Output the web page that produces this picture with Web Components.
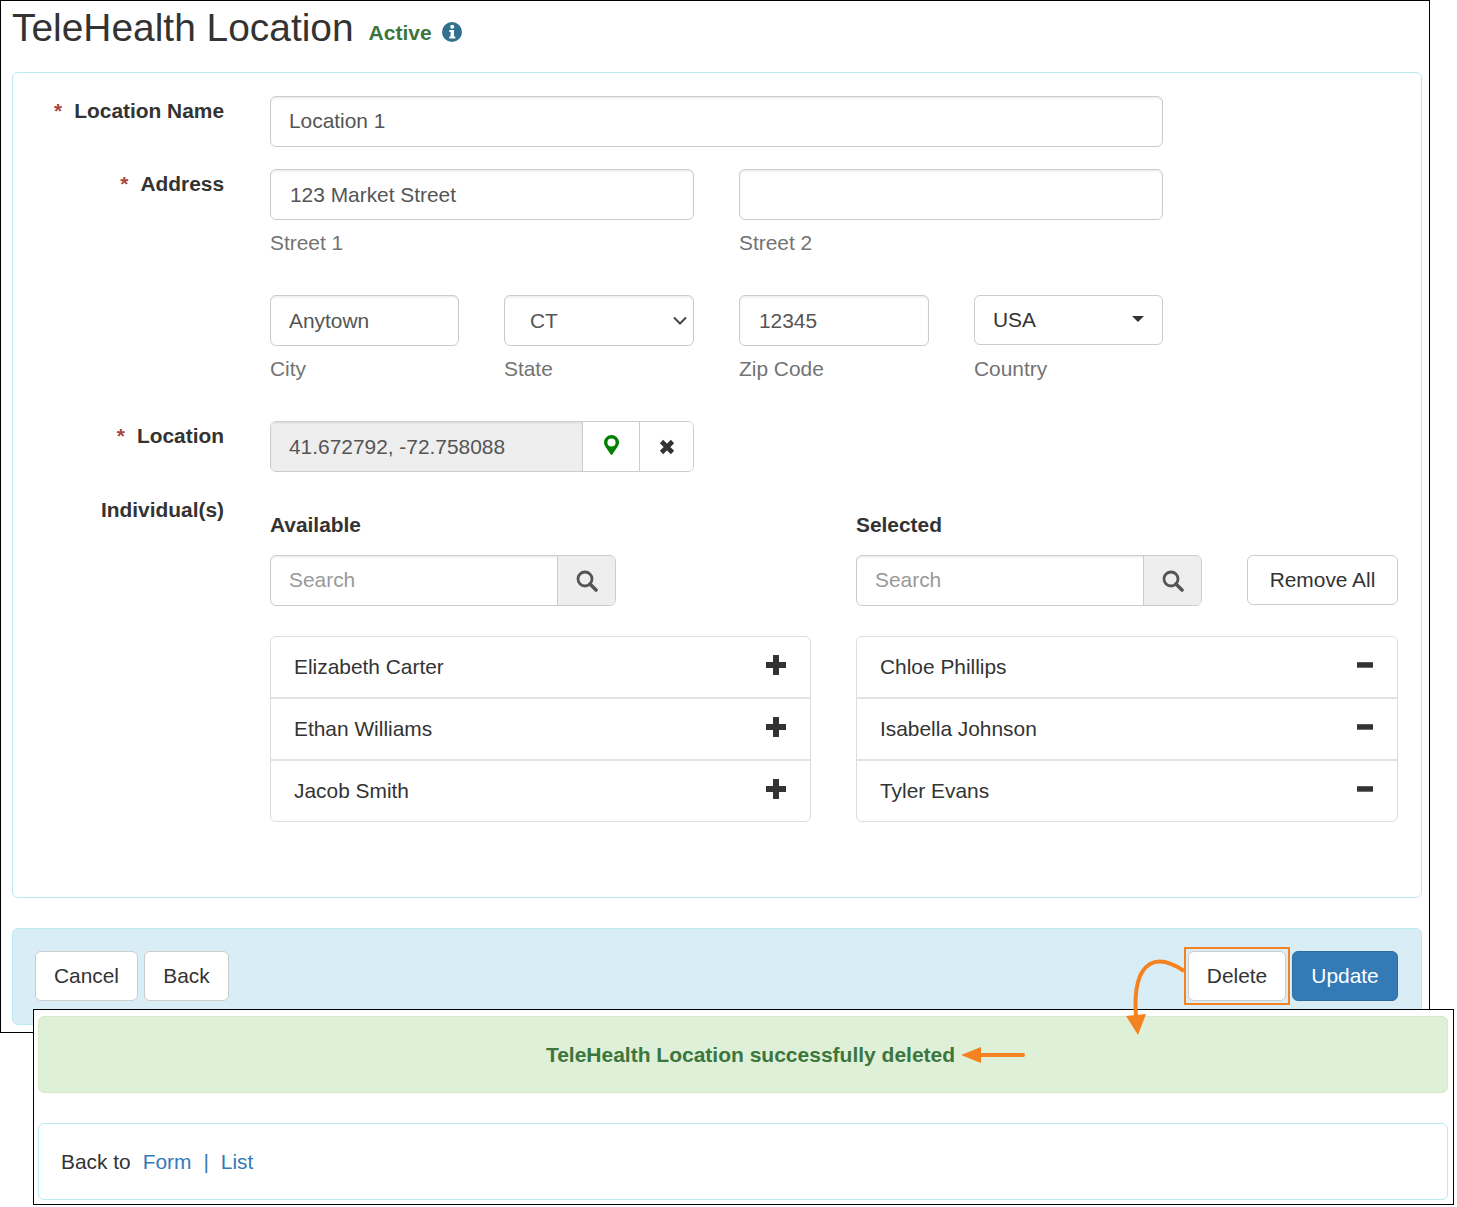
<!DOCTYPE html>
<html><head><meta charset="utf-8"><title>TeleHealth Location</title>
<style>
html,body{margin:0;padding:0;background:#fff}
body{font-family:"Liberation Sans",Arial,sans-serif;font-size:20.9px;color:#333}
</style></head><body>
<x-page>
  <x-window style="--l:0px;--t:0px;--w:1430px;--h:1033px">
    <x-title text="TeleHealth Location" status="Active"></x-title>
    <x-panel class="form" style="--h:826px;--mt:0px;--pad:23px 23px 0 0">
      <x-row label="Location Name" req>
        <x-field style="width:893px;--pb:2px">Location 1</x-field>
      </x-row>
      <x-row label="Address" req style="margin-top:22px">
        <x-cols tracks="424px 424px" style="width:893px">
          <x-labeled hint="Street 1"><x-field style="--pl:19px">123 Market Street</x-field></x-labeled>
          <x-labeled hint="Street 2"><x-field></x-field></x-labeled>
        </x-cols>
        <x-cols tracks="189px 190px 190px 189px" style="width:893px;margin-top:37px">
          <x-labeled hint="City"><x-field>Anytown</x-field></x-labeled>
          <x-labeled hint="State"><x-field kind="native" style="--pl:25px">CT</x-field></x-labeled>
          <x-labeled hint="Zip Code"><x-field style="--pl:19px">12345</x-field></x-labeled>
          <x-labeled hint="Country"><x-field kind="caret">USA</x-field></x-labeled>
        </x-cols>
      </x-row>
      <x-row label="Location" req style="margin-top:37px">
        <x-geo value="41.672792, -72.758088"></x-geo>
      </x-row>
      <x-row label="Individual(s)" style="margin-top:23px">
        <x-cols tracks="541px 542px" style="width:1128px">
          <x-picker heading="Available">
            <x-item name="Elizabeth Carter" op="add"></x-item>
            <x-item name="Ethan Williams" op="add"></x-item>
            <x-item name="Jacob Smith" op="add"></x-item>
          </x-picker>
          <x-picker heading="Selected" removable>
            <x-item name="Chloe Phillips" op="remove"></x-item>
            <x-item name="Isabella Johnson" op="remove"></x-item>
            <x-item name="Tyler Evans" op="remove"></x-item>
          </x-picker>
        </x-cols>
      </x-row>
    </x-panel>
    <x-actions>
      <x-btn style="width:103px">Cancel</x-btn>
      <x-btn style="width:85px">Back</x-btn>
      <span slot="right" style="display:flex;gap:6px">
        <x-btn style="width:98px">Delete</x-btn>
        <x-btn primary style="width:106px">Update</x-btn>
      </span>
    </x-actions>
  </x-window>
  <x-window style="--l:33px;--t:1009px;--w:1421px;--h:196px;--pl:4px">
    <x-alert>TeleHealth Location successfully deleted</x-alert>
    <x-backlinks></x-backlinks>
  </x-window>
  <x-annotations></x-annotations>
</x-page>
<script>
function def(name, css, html, extra){
  const tpl=document.createElement('template');
  tpl.innerHTML='<style>'+css+'</style>'+html;
  customElements.define(name, class extends HTMLElement{
    constructor(){super();this.attachShadow({mode:'open'}).appendChild(tpl.content.cloneNode(true));}
    connectedCallback(){ if(extra) extra.call(this,this.shadowRoot); }
  });
}
const ICON={
 search:'<svg width="22" height="22" viewBox="0 0 22 22"><circle cx="9" cy="9" r="7" fill="none" stroke="#555" stroke-width="2.8"/><path d="M14 14l6 6" stroke="#555" stroke-width="3.6" stroke-linecap="round"/></svg>',
 plus:'<svg width="20" height="20" viewBox="0 0 20 20" style="display:block"><path d="M7 0h6v7h7v6h-7v7H7v-7H0V7h7z" fill="#333"/></svg>',
 minus:'<svg width="16" height="6" viewBox="0 0 16 6" style="display:block"><rect width="16" height="5.500" y=".2" fill="#333"/></svg>',
 pin:'<svg width="15" height="20" viewBox="0 0 15 20" style="display:block"><path fill-rule="evenodd" d="M7.500 0a7.500 7.500 0 0 1 7.500 7.500c0 1.400-.4 2.400-1 3.600L8.300 19.400a.9.900 0 0 1-1.600 0L1 11.100C.4 9.900 0 8.900 0 7.500A7.500 7.500 0 0 1 7.500 0zm0 3.400a4.100 4.100 0 1 0 0 8.200 4.100 4.100 0 0 0 0-8.200z" fill="#008000"/></svg>',
 x:'<svg width="16" height="16" viewBox="0 0 16 16" style="display:block"><path d="M2.500 2.500l11 11M13.500 2.500l-11 11" stroke="#333" stroke-width="4.600" fill="none"/></svg>',
 info:'<svg width="20" height="20" viewBox="0 0 20 20" style="display:block"><circle cx="10" cy="10" r="10" fill="#31708f"/><circle cx="10.200" cy="4.800" r="2" fill="#fff"/><path d="M7.300 8h4.700v6.500h1.300v2H7.300v-2h1.300V10H7.300z" fill="#fff"/></svg>'
};
def('x-page',':host{display:block;position:relative;width:1457px;height:1207px;overflow:hidden;background:#fff}','<slot></slot>');
def('x-window',`:host{display:block;position:absolute;left:var(--l);top:var(--t);width:var(--w);height:var(--h);box-sizing:border-box;border:1.500px solid #000;background:#fff;padding-left:var(--pl,11px);padding-right:7px}`,'<slot></slot>');
def('x-title',`:host{display:flex;align-items:flex-start;height:71px;box-sizing:border-box;padding-top:2px}
 h1{margin:0;font-weight:400;font-size:38.900px;line-height:50px;color:#333}
 b{margin:15px 0 0 15px;font-size:21px;line-height:30px;color:#3c763d}
 i{margin:19px 0 0 10px}`,
 '<h1></h1><b></b><i></i>',function(r){r.querySelector('h1').textContent=this.getAttribute('text');r.querySelector('b').textContent=this.getAttribute('status');r.querySelector('i').innerHTML=ICON.info;});
def('x-panel',`:host{display:block;box-sizing:border-box;height:var(--h);border:1px solid #bce8f1;border-radius:6px;padding:var(--pad);background:#fff}`,'<slot></slot>');
def('x-row',`:host{display:flex;align-items:flex-start}
 .l{flex:none;width:211px;margin-right:46px;text-align:right;font-weight:700;line-height:30px;color:#333}
 .s{color:#a94442;margin-right:12px}
 .c{flex:none}`,
 '<div class="l"><span class="s"></span><span class="t"></span></div><div class="c"><slot></slot></div>',function(r){r.querySelector('.t').textContent=this.getAttribute('label');const s=r.querySelector('.s');if(this.hasAttribute('req'))s.textContent='*';else s.remove();});
def('x-cols',`:host{display:grid;column-gap:45px}`,'<slot></slot>',function(){this.style.gridTemplateColumns=this.getAttribute('tracks');});
def('x-labeled',`:host{display:block;min-width:0}.h{margin-top:8px;line-height:30px;color:#737373}`,'<slot></slot><div class="h"></div>',function(r){r.querySelector('.h').textContent=this.getAttribute('hint');});
def('x-field',`:host{display:flex;align-items:center;justify-content:space-between;box-sizing:border-box;height:51px;border:1px solid #ccc;border-radius:6px;padding:0 14px var(--pb,0) var(--pl,18px);color:#555;background:#fff;box-shadow:inset 0 1.500px 1.500px rgba(0,0,0,.075)}
 :host([kind=caret]){height:50px;margin-bottom:9px;color:#333;box-shadow:none;padding-right:18px}
 :host([kind=native]){padding-right:6px}
 svg{display:block}`,'<span><slot></slot></span><span class="a"></span>',function(r){const k=this.getAttribute('kind'),a=r.querySelector('.a');
 if(k==='native')a.innerHTML='<svg width="14" height="9" viewBox="0 0 14 9"><path d="M1 1.500l6 6 6-6" fill="none" stroke="#444" stroke-width="2"/></svg>';
 if(k==='caret')a.innerHTML='<svg width="12" height="6" viewBox="0 0 12 6" style="margin-top:-2px"><path d="M0 0h12L6 6z" fill="#333"/></svg>';});
def('x-geo',`:host{display:flex;width:424px;height:51px;box-sizing:border-box;border:1px solid #ccc;border-radius:6px;overflow:hidden}
 .v{flex:1;display:flex;align-items:center;padding-left:18px;background:#eee;color:#555;box-shadow:inset 0 1.500px 1.500px rgba(0,0,0,.075)}
 .b{display:flex;align-items:center;justify-content:center;border-left:1px solid #ccc;background:#fff;box-sizing:border-box}
 .p{width:57px;padding-bottom:4px}.x{width:54px}`,
 '<div class="v"></div><div class="b p"></div><div class="b x"></div>',function(r){r.querySelector('.v').textContent=this.getAttribute('value');r.querySelector('.p').innerHTML=ICON.pin;r.querySelector('.x').innerHTML=ICON.x;});
def('x-search',`:host{display:flex;width:346px;height:51px;box-sizing:border-box;border:1px solid #ccc;border-radius:6px;overflow:hidden;box-shadow:inset 0 1.500px 1.500px rgba(0,0,0,.075)}
 .p{flex:1;display:flex;align-items:center;padding:0 0 2px 18px;color:#999}
 .b{width:58px;box-sizing:border-box;border-left:1px solid #ccc;background:#eee;display:flex;align-items:center;justify-content:center}`,
 '<div class="p">Search</div><div class="b"></div>',function(r){r.querySelector('.b').innerHTML=ICON.search;});
def('x-btn',`:host{display:inline-flex;align-items:center;justify-content:center;box-sizing:border-box;height:50px;border:1px solid #ccc;border-radius:6px;background:#fff;color:#333}
 :host([primary]){background:#337ab7;border-color:#2e6da4;color:#fff}`,'<slot></slot>');
def('x-picker',`:host{display:block;min-width:0;padding-top:15px}
 h4{margin:0 0 15px;font-size:20.900px;line-height:30px;font-weight:700;color:#333}
 .s{display:flex;justify-content:space-between;align-items:flex-start}
 .l{margin-top:30px;border:1px solid #ddd;border-radius:6px;overflow:hidden}`,
 '<h4></h4><div class="s"><x-search></x-search><span class="rm"></span></div><div class="l"><slot></slot></div>',function(r){r.querySelector('h4').textContent=this.getAttribute('heading');
  if(this.hasAttribute('removable')){const b=document.createElement('x-btn');b.textContent='Remove All';b.style.width='151px';r.querySelector('.rm').appendChild(b);}});
def('x-item',`:host{display:flex;align-items:center;justify-content:space-between;box-sizing:border-box;height:62px;padding:0 24px 0 23px;color:#333;border-top:2px solid #e3e3e3}
 :host(:first-child){border-top:0;height:60px}
 .i{margin-top:-5px}`,'<span class="n"></span><span class="i"></span>',function(r){r.querySelector('.n').textContent=this.getAttribute('name');r.querySelector('.i').innerHTML=this.getAttribute('op')==='add'?ICON.plus:ICON.minus;});
def('x-actions',`:host{display:flex;justify-content:space-between;box-sizing:border-box;margin-top:30px;height:97px;padding:22px 23px 0 22px;background:#d9edf7;border:1px solid #bce8f1;border-radius:6px}
 .g{display:flex;gap:6px;align-items:flex-start}`,'<div class="g"><slot></slot></div><div class="g"><slot name="right"></slot></div>');
def('x-alert',`:host{display:flex;align-items:center;justify-content:center;box-sizing:border-box;margin-top:5.500px;width:1410px;height:77px;background:#dff0d8;border:1px solid #d6e9c6;border-radius:6px;color:#3c763d;font-weight:700;padding:1px 0 0 15px;font-size:21px}`,'<span><slot></slot></span>');
def('x-backlinks',`:host{display:flex;align-items:center;box-sizing:border-box;margin-top:30px;width:1410px;height:77px;padding:2px 0 0 22px;border:1px solid #bce8f1;border-radius:6px;color:#333}
 a{color:#337ab7;text-decoration:none}
 .a{margin-left:12px}.p{color:#337ab7;margin:0 12px}`,'<span>Back to</span><a class="a" href="#">Form</a><span class="p">|</span><a href="#">List</a>');
def('x-annotations',`:host{position:absolute;left:0;top:0;width:1457px;height:1207px;pointer-events:none}svg{display:block}`,
 `<svg width="1457" height="1207" viewBox="0 0 1457 1207">
  <rect x="1185" y="948" width="104" height="56" fill="none" stroke="#f58220" stroke-width="2"/>
  <path d="M1184 971C1172 963 1159 959 1150 964C1138 971 1134 990 1136 1017" fill="none" stroke="#f58220" stroke-width="4"/>
  <path d="M1126 1016L1146 1014L1138 1035z" fill="#f58220"/>
  <path d="M1023 1055H978" fill="none" stroke="#f58220" stroke-width="4" stroke-linecap="round"/>
  <path d="M961 1055L981 1047V1063z" fill="#f58220"/>
 </svg>`);
</script>
</body></html>
